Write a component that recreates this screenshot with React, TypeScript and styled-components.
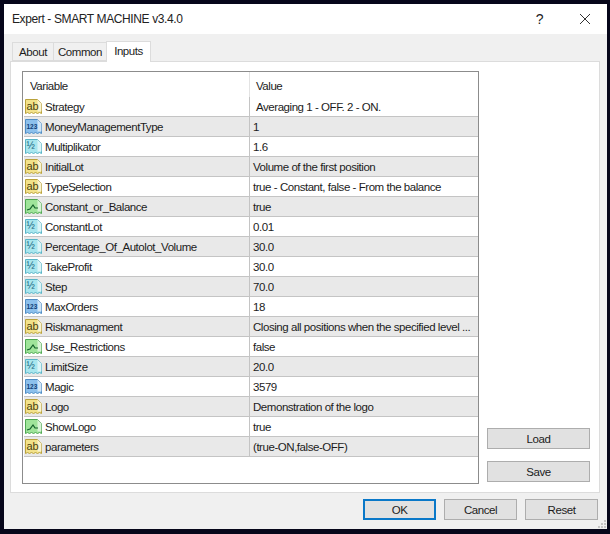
import styled, { createGlobalStyle } from "styled-components"

const GlobalStyle = createGlobalStyle`
  html, body {
    margin: 0;
    padding: 0;
    background: #06061a;
  }
  * {
    box-sizing: border-box;
  }
`

const Frame = styled.div`
  width: 610px;
  height: 534px;
  padding: 4px 3px 5px 4px;
  background: #06061a;
  font-family: "Liberation Sans", Arial, sans-serif;
  font-size: 11.5px;
  letter-spacing: -0.45px;
  color: #1c1c1c;
`

const Dialog = styled.div`
  height: 100%;
  display: flex;
  flex-direction: column;
  background: #f0f0f0;
  position: relative;
`

const TitleBar = styled.div`
  height: 30px;
  flex: none;
  display: flex;
  align-items: center;
  background: #fff;
  padding: 0 0 0 8px;
  font-size: 12px;
  letter-spacing: -0.38px;
  color: #222;
`

const Title = styled.span`
  flex: 1;
`

const TitleButton = styled.div`
  width: 45px;
  height: 30px;
  display: flex;
  align-items: center;
  justify-content: center;
  font-size: 14px;
`

const Tabs = styled.div`
  height: 27px;
  flex: none;
  display: flex;
  align-items: flex-end;
  padding: 7px 0 0 9px;
`

const Tab = styled.div<{ $active?: boolean; $width: number }>`
  height: ${({ $active }) => ($active ? "21px" : "19px")};
  width: ${({ $width }) => $width}px;
  padding-bottom: ${({ $active }) => ($active ? "3px" : "0")};
  margin-bottom: ${({ $active }) => ($active ? "-1px" : "0")};
  display: flex;
  align-items: center;
  justify-content: center;
  background: ${({ $active }) => ($active ? "#fff" : "#f0f0f0")};
  border: 1px solid #dcdcdc;
  border-bottom: ${({ $active }) => ($active ? "none" : "1px solid #dcdcdc")};
  margin-left: -1px;
  position: relative;
`

const Body = styled.div`
  width: 590px;
  height: 432px;
  margin-left: 6px;
  flex: none;
  background: #fff;
  border: 1px solid #dcdcdc;
  padding: 9px 9px 9px 11px;
  display: flex;
  gap: 8px;
`

const Table = styled.div`
  width: 457px;
  height: 413px;
  flex: none;
  border: 1px solid #8c8c8c;
  padding-left: 1px;
  display: flex;
  flex-direction: column;
`

const HeaderRow = styled.div`
  height: 25px;
  flex: none;
  display: grid;
  grid-template-columns: 225px 1fr;
  align-items: center;
`

const HeaderCell = styled.div<{ $divider?: boolean }>`
  height: 100%;
  display: flex;
  align-items: center;
  padding-left: 6px;
  padding-top: 2px;
  border-left: ${({ $divider }) => ($divider ? "1px solid #e3e3e3" : "none")};
`

const Row = styled.div<{ $shaded: boolean }>`
  height: 20px;
  flex: none;
  display: grid;
  grid-template-columns: 225px 1fr;
  align-items: stretch;
  background: ${({ $shaded }) => ($shaded ? "#e9e9e9" : "#fff")};
  border-bottom: 1px solid #c4c4c4;
`

const NameCell = styled.div`
  display: flex;
  align-items: center;
  gap: 3px;
  padding-left: 1px;
  white-space: nowrap;
`

const ValueCell = styled.div<{ $indent?: boolean }>`
  display: flex;
  align-items: center;
  padding-left: ${({ $indent }) => ($indent ? "6px" : "3px")};
  border-left: 1px solid #c4c4c4;
  white-space: nowrap;
`

const SideColumn = styled.div`
  flex: 1;
  display: flex;
  flex-direction: column;
  justify-content: flex-end;
  gap: 12px;
  padding-bottom: 1px;
`

const Button = styled.button<{ $primary?: boolean }>`
  height: 21px;
  padding: 0;
  font: inherit;
  letter-spacing: inherit;
  color: inherit;
  background: #e1e1e1;
  border: ${({ $primary }) => ($primary ? "2px solid #0a78c8" : "1px solid #adadad")};
`

const Footer = styled.div`
  flex: 1;
  display: flex;
  justify-content: flex-end;
  align-items: flex-start;
  gap: 8px;
  padding: 6px 9px 0 0;
`

const FooterButton = styled(Button)`
  width: 73px;
`

const Grip = styled.svg`
  position: absolute;
  right: 0;
  bottom: 0;
`

type IconKind = "text" | "int" | "double" | "bool"

const iconColors: Record<IconKind, { fill: string; edge: string; ink: string }> = {
  text: { fill: "#f3e28a", edge: "#b9a23c", ink: "#4a4210" },
  int: { fill: "#8cc0ec", edge: "#4f8dc4", ink: "#123f78" },
  double: { fill: "#a8e6ee", edge: "#58b4c6", ink: "#15607a" },
  bool: { fill: "#9fe49a", edge: "#4fa852", ink: "#12602a" },
}

const VarIcon = ({ kind }: { kind: IconKind }) => {
  const c = iconColors[kind]
  return (
    <svg width="17" height="17" viewBox="0 0 17 17" style={{ flex: "none" }}>
      <path
        d="M.5 1.5h12l4 4v10l-2-1-2 1-2-1-2 1-2-1-2 1-2-1-2 1z"
        fill={c.fill}
        stroke={c.edge}
      />
      <path d="M12.5 1.5v12h4v-8z" fill="#fff" fillOpacity=".6" stroke="none" />
      {kind === "text" && (
        <text x="1.5" y="11.5" fontSize="11" letterSpacing="0" fontFamily="Liberation Sans" fill={c.ink}>
          ab
        </text>
      )}
      {kind === "int" && (
        <text x="1.5" y="11" fontSize="6.5" letterSpacing="0" fontWeight="700" fontFamily="Liberation Sans" fill={c.ink}>
          123
        </text>
      )}
      {kind === "double" && (
        <text x="1.5" y="11" fontSize="10" letterSpacing="0" fontFamily="Liberation Sans" fill={c.ink}>
          ½
        </text>
      )}
      {kind === "bool" && (
        <path d="M2 12l3-1 3-4 2 3h3" fill="none" stroke={c.ink} strokeWidth="1.2" />
      )}
    </svg>
  )
}

const rows: { name: string; value: string; kind: IconKind; indent?: boolean }[] = [
  { name: "Strategy", value: "Averaging 1 - OFF. 2 - ON.", kind: "text", indent: true },
  { name: "MoneyManagementType", value: "1", kind: "int" },
  { name: "Multiplikator", value: "1.6", kind: "double" },
  { name: "InitialLot", value: "Volume of the first position", kind: "text" },
  { name: "TypeSelection", value: "true - Constant, false - From the balance", kind: "text" },
  { name: "Constant_or_Balance", value: "true", kind: "bool" },
  { name: "ConstantLot", value: "0.01", kind: "double" },
  { name: "Percentage_Of_Autolot_Volume", value: "30.0", kind: "double" },
  { name: "TakeProfit", value: "30.0", kind: "double" },
  { name: "Step", value: "70.0", kind: "double" },
  { name: "MaxOrders", value: "18", kind: "int" },
  { name: "Riskmanagment", value: "Closing all positions when the specified level ...", kind: "text" },
  { name: "Use_Restrictions", value: "false", kind: "bool" },
  { name: "LimitSize", value: "20.0", kind: "double" },
  { name: "Magic", value: "3579", kind: "int" },
  { name: "Logo", value: "Demonstration of the logo", kind: "text" },
  { name: "ShowLogo", value: "true", kind: "bool" },
  { name: "parameters", value: "(true-ON,false-OFF)", kind: "text" },
]

export default function App() {
  return (
    <Frame>
      <GlobalStyle />
      <Dialog>
        <TitleBar>
          <Title>Expert - SMART MACHINE v3.4.0</Title>
          <TitleButton>?</TitleButton>
          <TitleButton>
            <svg width="12" height="12" viewBox="0 0 12 12">
              <path d="M1 1l10 10M11 1L1 11" stroke="#333" fill="none" />
            </svg>
          </TitleButton>
        </TitleBar>
        <Tabs>
          <Tab $width={42}>About</Tab>
          <Tab $width={54}>Common</Tab>
          <Tab $active $width={45}>Inputs</Tab>
        </Tabs>
        <Body>
          <Table>
            <HeaderRow>
              <HeaderCell>Variable</HeaderCell>
              <HeaderCell $divider>Value</HeaderCell>
            </HeaderRow>
            {rows.map((row, i) => (
              <Row key={row.name} $shaded={i % 2 === 1}>
                <NameCell>
                  <VarIcon kind={row.kind} />
                  {row.name}
                </NameCell>
                <ValueCell $indent={row.indent}>{row.value}</ValueCell>
              </Row>
            ))}
          </Table>
          <SideColumn>
            <Button>Load</Button>
            <Button>Save</Button>
          </SideColumn>
        </Body>
        <Footer>
          <FooterButton $primary>OK</FooterButton>
          <FooterButton>Cancel</FooterButton>
          <FooterButton>Reset</FooterButton>
        </Footer>
        <Grip width="12" height="12" viewBox="0 0 12 12">
          <path d="M9 3h2v2H9zM6 6h2v2H6zM9 6h2v2H9zM3 9h2v2H3zM6 9h2v2H6zM9 9h2v2H9z" fill="#c4c4c4" />
        </Grip>
      </Dialog>
    </Frame>
  )
}
